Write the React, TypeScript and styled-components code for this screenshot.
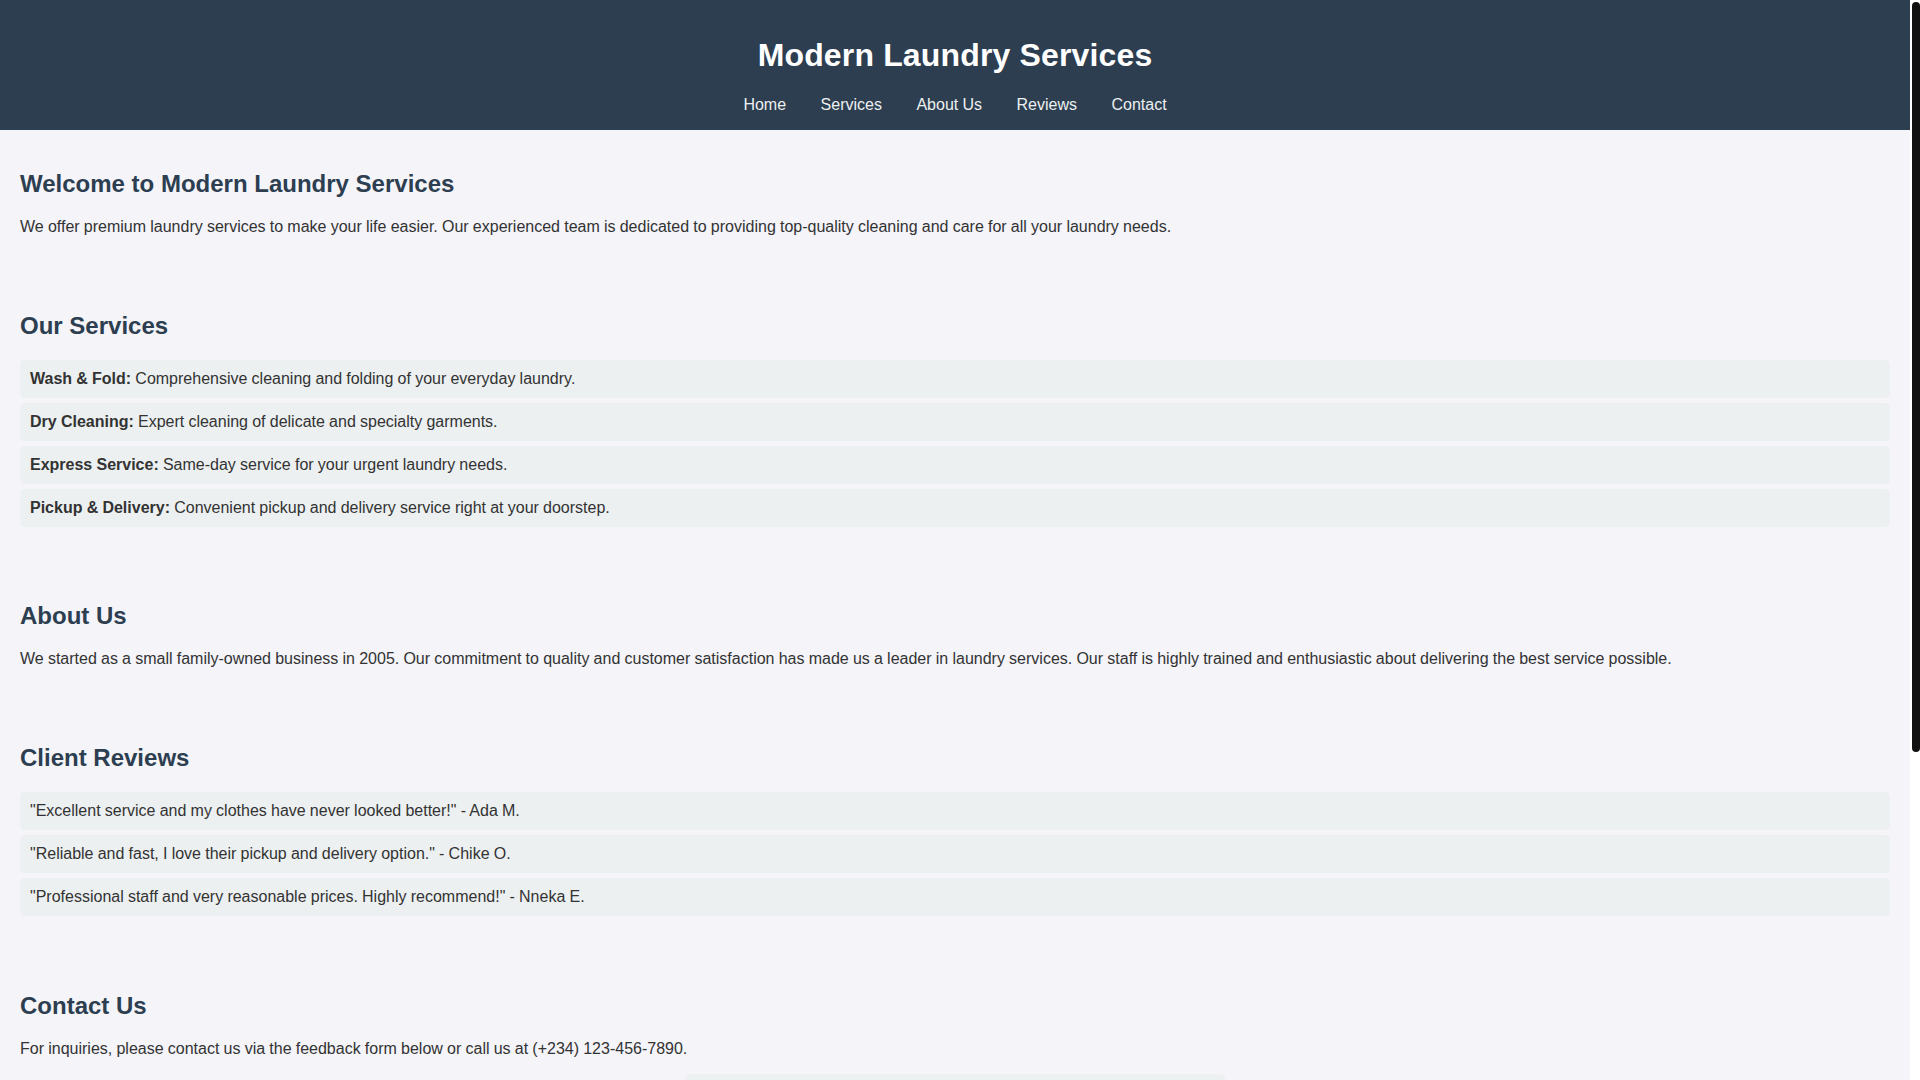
import styled, { createGlobalStyle } from "styled-components";

const GlobalStyle = createGlobalStyle`
  html, body {
    margin: 0;
    padding: 0;
  }
  body {
    font-family: Arial, "Liberation Sans", sans-serif;
    background-color: #f4f4f9;
    color: #333;
    word-spacing: -0.25px;
  }
`;

const Page = styled.div`
  margin-right: 10px;
`;

// drawn scrollbar, sits over the right edge of the window
const ScrollRail = styled.div`
  position: fixed;
  top: 0;
  right: 0;
  width: 10px;
  height: 100vh;
  background-color: #ffffff;
`;

const ScrollThumb = styled.div`
  margin: 2px 0 0 2px;
  width: 8px;
  height: 750px;
  background-color: #111;
  border-radius: 4px;
`;

const Header = styled.header`
  background-color: #2c3e50;
  color: #fff;
  padding: 1rem;
  text-align: center;
`;

const SiteTitle = styled.h1`
  font-size: 2em;
  margin: 0.67em 0;
  word-spacing: normal;
  letter-spacing: 0.15px;
`;

const Nav = styled.nav`
  display: flex;
  justify-content: center;
  gap: 34.5px;
`;

const NavLink = styled.a`
  color: #ecf0f1;
  text-decoration: none;
  font-size: 16px;
`;

const Section = styled.section`
  padding: 20px;
`;

const SectionTitle = styled.h2`
  font-size: 1.5em;
  color: #2c3e50;
  margin: 0.83em 0;
  word-spacing: normal;
`;

const Text = styled.p`
  margin: 1em 0;
  font-size: 16px;
`;

const List = styled.ul`
  list-style: none;
  padding: 0;
  margin: 1em 0;
`;

const ListItem = styled.li`
  background-color: #ecf0f1;
  padding: 10px;
  margin-bottom: 5px;
  border-radius: 5px;
`;

const Form = styled.form`
  max-width: 500px;
  margin: 0 auto;
  padding: 20px;
  background-color: #ecf0f1;
  border-radius: 5px;
`;

const Label = styled.label`
  display: block;
  margin-bottom: 5px;
`;

const Input = styled.input`
  display: block;
  width: 100%;
  box-sizing: border-box;
  padding: 10px;
  margin-bottom: 15px;
  border: 1px solid #ccc;
  border-radius: 5px;
  font-family: inherit;
  font-size: 16px;
`;

const TextArea = styled.textarea`
  display: block;
  width: 100%;
  height: 133px;
  box-sizing: border-box;
  padding: 10px;
  margin-bottom: 15px;
  border: 1px solid #ccc;
  border-radius: 5px;
  font-family: inherit;
  font-size: 16px;
  resize: vertical;
`;

const Button = styled.button`
  display: block;
  padding: 10px 20px;
  background-color: #2c3e50;
  color: #fff;
  border: none;
  border-radius: 5px;
  font-family: inherit;
  font-size: 16px;
  cursor: pointer;
`;

const Footer = styled.footer`
  background-color: #2c3e50;
  color: #fff;
  text-align: center;
  padding: 16px;
`;

const navItems = ["Home", "Services", "About Us", "Reviews", "Contact"];

const services = [
  { name: "Wash & Fold:", text: "Comprehensive cleaning and folding of your everyday laundry." },
  { name: "Dry Cleaning:", text: "Expert cleaning of delicate and specialty garments." },
  { name: "Express Service:", text: "Same-day service for your urgent laundry needs." },
  { name: "Pickup & Delivery:", text: "Convenient pickup and delivery service right at your doorstep." },
];

const reviews = [
  "\"Excellent service and my clothes have never looked better!\" - Ada M.",
  "\"Reliable and fast, I love their pickup and delivery option.\" - Chike O.",
  "\"Professional staff and very reasonable prices. Highly recommend!\" - Nneka E.",
];

const App = () => {
  return (
    <>
      <GlobalStyle />
      <Page>
        <Header>
          <SiteTitle>Modern Laundry Services</SiteTitle>
          <Nav>
            {navItems.map((item) => (
              <NavLink key={item} href={"#" + item.toLowerCase().replace(" ", "")}>
                {item}
              </NavLink>
            ))}
          </Nav>
        </Header>

        <Section id="home">
          <SectionTitle>Welcome to Modern Laundry Services</SectionTitle>
          <Text>
            We offer premium laundry services to make your life easier. Our experienced team is dedicated to
            providing top-quality cleaning and care for all your laundry needs.
          </Text>
        </Section>

        <Section id="services">
          <SectionTitle>Our Services</SectionTitle>
          <List>
            {services.map((s) => (
              <ListItem key={s.name}>
                <strong>{s.name}</strong> {s.text}
              </ListItem>
            ))}
          </List>
        </Section>

        <Section id="aboutus">
          <SectionTitle>About Us</SectionTitle>
          <Text>
            We started as a small family-owned business in 2005. Our commitment to quality and customer
            satisfaction has made us a leader in laundry services. Our staff is highly trained and enthusiastic
            about delivering the best service possible.
          </Text>
        </Section>

        <Section id="reviews">
          <SectionTitle>Client Reviews</SectionTitle>
          <List>
            {reviews.map((r) => (
              <ListItem key={r}>{r}</ListItem>
            ))}
          </List>
        </Section>

        <Section id="contact">
          <SectionTitle>Contact Us</SectionTitle>
          <Text>For inquiries, please contact us via the feedback form below or call us at (+234) 123-456-7890.</Text>
          <Form onSubmit={(e) => e.preventDefault()}>
            <Label htmlFor="name">Name:</Label>
            <Input id="name" type="text" />
            <Label htmlFor="email">Email:</Label>
            <Input id="email" type="email" />
            <Label htmlFor="message">Feedback:</Label>
            <TextArea id="message" />
            <Button type="submit">Submit</Button>
          </Form>
        </Section>

        <Footer>&copy; 2024 Modern Laundry Services. All rights reserved.</Footer>
      </Page>
      <ScrollRail>
        <ScrollThumb />
      </ScrollRail>
    </>
  );
};

export default App;
